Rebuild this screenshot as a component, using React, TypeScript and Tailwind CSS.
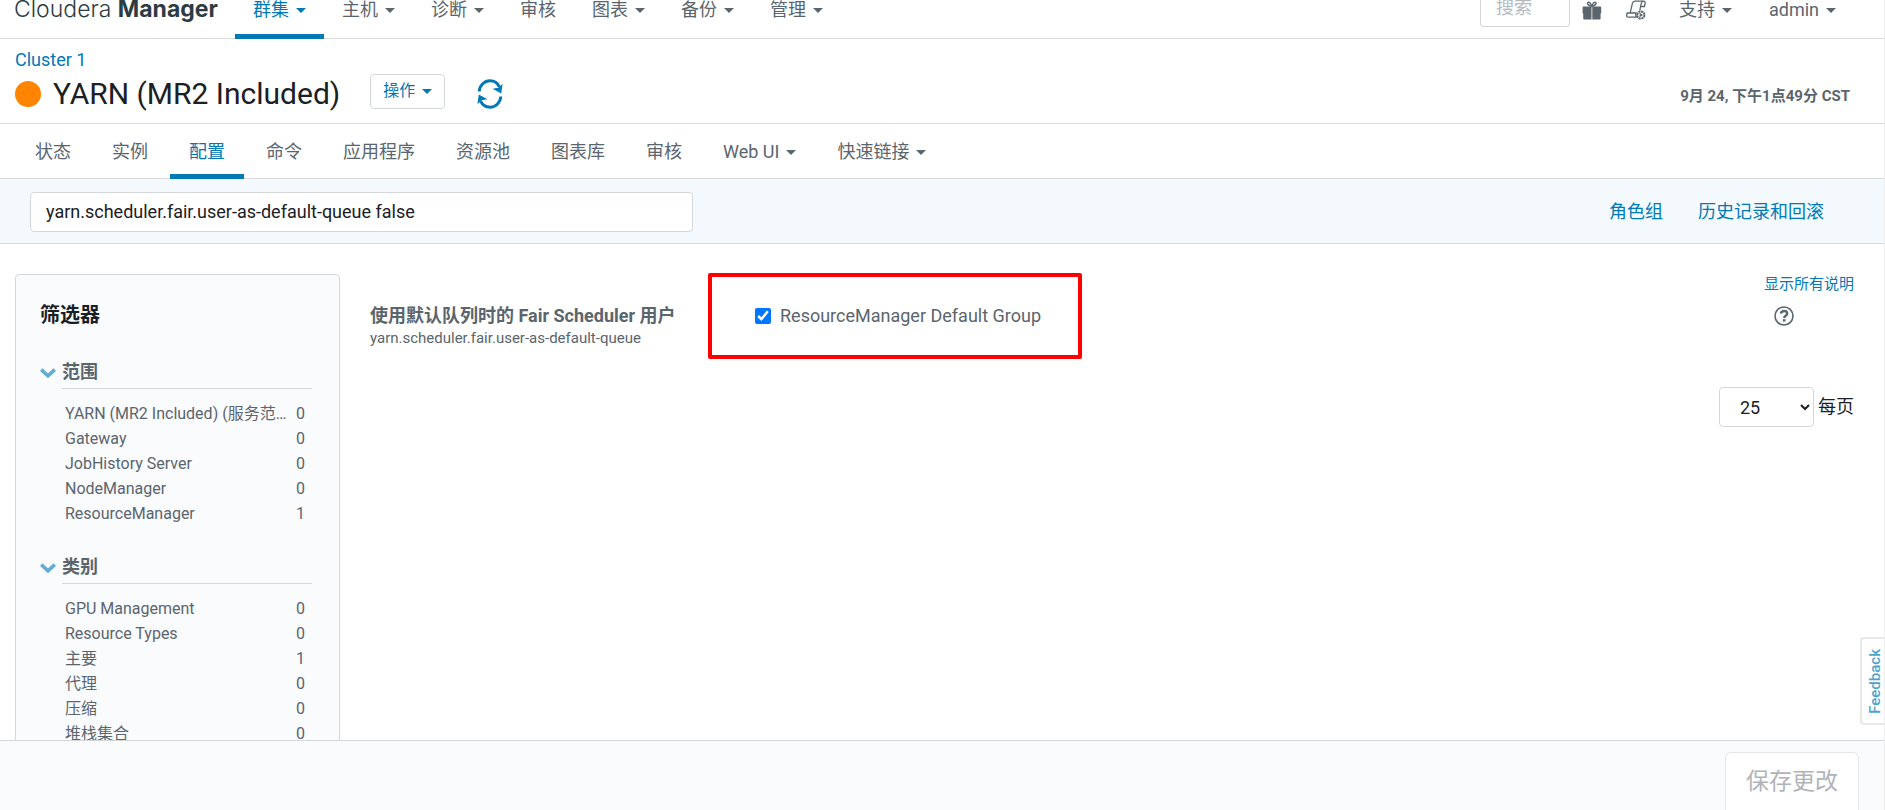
import type { ReactNode } from 'react';

type MenuItem = { label: string; caret?: boolean; active?: boolean };
type Filter = { label: string; count: number };

const mainMenu: MenuItem[] = [
  { label: '群集', caret: true, active: true },
  { label: '主机', caret: true },
  { label: '诊断', caret: true },
  { label: '审核' },
  { label: '图表', caret: true },
  { label: '备份', caret: true },
  { label: '管理', caret: true },
];

const tabs: MenuItem[] = [
  { label: '状态' },
  { label: '实例' },
  { label: '配置', active: true },
  { label: '命令' },
  { label: '应用程序' },
  { label: '资源池' },
  { label: '图表库' },
  { label: '审核' },
  { label: 'Web UI', caret: true },
  { label: '快速链接', caret: true },
];

const scopeFilters: Filter[] = [
  { label: 'YARN (MR2 Included) (服务范围)', count: 0 },
  { label: 'Gateway', count: 0 },
  { label: 'JobHistory Server', count: 0 },
  { label: 'NodeManager', count: 0 },
  { label: 'ResourceManager', count: 1 },
];

const categoryFilters: Filter[] = [
  { label: 'GPU Management', count: 0 },
  { label: 'Resource Types', count: 0 },
  { label: '主要', count: 1 },
  { label: '代理', count: 0 },
  { label: '压缩', count: 0 },
  { label: '堆栈集合', count: 0 },
];

function Caret() {
  return (
    <svg viewBox="0 0 10 5" className="ml-[7px] h-[5px] w-[10px] shrink-0" aria-hidden="true">
      <path d="M0 0h10L5 5z" fill="currentColor" />
    </svg>
  );
}

function GiftIcon() {
  return (
    <svg viewBox="0 0 20 20" className="size-5" aria-hidden="true" fill="currentColor">
      <path d="M1.600 6.600h7.900v12.900H2.200a1 1 0 0 1-1-1v-5.200H.6V7.600a1 1 0 0 1 1-1zM10.300 6.600H18.200a1 1 0 0 1 1 1v5.700h-.6v5.200a1 1 0 0 1-1 1h-7.300z" />
      <path
        d="M9.800 6.400C8.800 3 7.400 1.800 6.200 2.300 4.700 3 5.600 5.400 9.800 6.400zM9.800 6.400C10.800 3 12.200 1.800 13.400 2.300c1.500.7.6 3.100-3.600 4.100z"
        fill="none"
        stroke="currentColor"
        strokeWidth="1.4"
      />
    </svg>
  );
}

function ScriptIcon() {
  return (
    <svg
      viewBox="0 0 20 20"
      className="size-5"
      aria-hidden="true"
      fill="none"
      stroke="currentColor"
      strokeWidth="1.3"
    >
      <path d="M4.200 12.800 6.400 3.400C6.800 1.800 7.600 1.200 8.800 1.200h8.600c1.400 0 2 1 1.700 2.300l-.6 3h-3.500" />
      <path d="M17.200 1.200c-1.200.2-1.700 1.200-2 2.500l-1.400 6.600" />
      <path d="M10.400 17.200H2.200c-1.400 0-1.700-1.200-1.500-2.200l.5-2H10c-.3 1.600-.5 3.400.4 4.200z" />
      <circle cx="14.800" cy="15" r="3.600" strokeWidth="2" strokeDasharray="2.2 .6" />
      <path d="M13.600 12.800v4.400l3.400-2.200z" fill="currentColor" stroke="none" />
    </svg>
  );
}

function RefreshIcon() {
  return (
    <svg viewBox="0 0 26 30" className="h-[30px] w-[26px]" aria-hidden="true">
      <g fill="none" stroke="currentColor" strokeWidth="3">
        <path d="M2.200 12.500C2.700 6.200 7.500 1.800 13 1.800c4.200 0 7.600 2.200 9.400 6" />
        <path d="M23.800 17.500C23.300 23.800 18.500 28.200 13 28.200c-4.200 0-7.600-2.200-9.400-6" />
      </g>
      <path d="M25.600 5 24.200 14.600 15.600 9.800l5.600-1z" fill="currentColor" />
      <path d="M.4 25 1.800 15.400l8.600 4.800-5.600 1z" fill="currentColor" />
    </svg>
  );
}

function HelpIcon() {
  return (
    <svg viewBox="0 0 20 20" className="size-5" aria-hidden="true" fill="none" stroke="currentColor">
      <circle cx="10" cy="10" r="9" strokeWidth="1.6" />
      <path
        d="M6.800 7.600C7.200 5.800 8.500 5 10.100 5c1.800 0 3.100 1 3.100 2.600 0 2.200-3 2.100-3 4.400"
        strokeWidth="2.4"
      />
      <path d="M10.200 13.200v2.400" strokeWidth="2.6" />
    </svg>
  );
}

function FilterGroup({ title, filters }: { title: string; filters: Filter[] }) {
  return (
    <section className="mb-[29px]">
      <h3>
        <button type="button" className="flex w-full items-center text-lg font-bold leading-6">
          <svg viewBox="0 0 16 10" className="mb-1 mr-[6px] h-[10px] w-4 text-[#62acd1]" aria-hidden="true">
            <path d="M1.200 1.600 8 7.800l6.800-6.200" fill="none" stroke="currentColor" strokeWidth="3.600" />
          </svg>
          <span className="flex-1 border-b border-[#d4d7da] pb-1 text-left">{title}</span>
        </button>
      </h3>
      <ul className="mt-3 pl-[25px] pr-[7px]">
        {filters.map((filter) => (
          <li key={filter.label}>
            <a href="#filter" className="flex justify-between text-base leading-[25px]">
              <span className="w-[228px] truncate">{filter.label}</span>
              <span>{filter.count}</span>
            </a>
          </li>
        ))}
      </ul>
    </section>
  );
}

function NavLink({ item, className }: { item: MenuItem; className: string }) {
  const tone = item.active ? 'border-[#0079b4] text-[#0079b4]' : 'border-transparent';
  return (
    <a href="#nav" className={`flex whitespace-nowrap border-b-[5px] ${tone} ${className}`}>
      <span className="flex items-center self-start">
        {item.label}
        {item.caret && <Caret />}
      </span>
    </a>
  );
}

function IconButton({ label, children }: { label: string; children: ReactNode }) {
  return (
    <button type="button" aria-label={label}>
      {children}
    </button>
  );
}

export default function App() {
  return (
    <div className="relative flex h-screen flex-col overflow-hidden border-r border-[#eeeeee] bg-white font-[Roboto,'Noto_Sans_CJK_SC',sans-serif] text-lg leading-6 text-[#5a656d]">
      <header className="flex h-[39px] shrink-0 items-stretch border-b border-[#d9dbdd] leading-5">
        <a href="#home" className="w-[235px] pl-[14px] text-[#2d3c44]">
          <span className="block whitespace-nowrap font-[Inter,sans-serif] text-[23px] font-light leading-[18px]">
            Cloudera <b className="font-bold">Manager</b>
          </span>
        </a>
        <nav className="-mb-px flex flex-1">
          {mainMenu.map((item) => (
            <NavLink key={item.label} item={item} className="px-[18px]" />
          ))}
        </nav>
        <div className="flex items-start pr-[48px]">
          <input
            type="search"
            aria-label="搜索"
            placeholder="搜索"
            className="mr-3 h-[27px] w-[90px] rounded-b-sm border border-t-0 border-[#d4d7da] px-[15px] pb-[11px] leading-4 placeholder:text-[#b4babf]"
          />
          <IconButton label="新功能">
            <GiftIcon />
          </IconButton>
          <span className="w-6" />
          <IconButton label="运行命令">
            <ScriptIcon />
          </IconButton>
          <button type="button" className="ml-[33px] flex items-center">
            支持
            <Caret />
          </button>
          <button type="button" className="ml-[37px] flex items-center">
            admin
            <Caret />
          </button>
        </div>
      </header>

      <div className="flex h-[85px] shrink-0 items-end justify-between border-b border-[#d9dbdd] pb-[9px] pl-[15px] pr-[34px]">
        <div>
          <a href="#cluster" className="mb-[2px] block text-[#0079b4]">
            Cluster 1
          </a>
          <div className="flex h-10 items-center">
            <span className="size-[26px] rounded-full bg-[#ff8400]" />
            <h1 className="ml-3 text-3xl text-[#1b2024]">YARN (MR2 Included)</h1>
            <button
              type="button"
              className="mb-[6px] ml-[30px] flex h-[35px] items-center rounded-sm border border-[#d4d7da] px-3 text-base text-[#0079b4]"
            >
              操作
              <Caret />
            </button>
            <button type="button" aria-label="刷新" className="ml-8 text-[#0079b4]">
              <RefreshIcon />
            </button>
          </div>
        </div>
        <time className="pb-[6px] text-[15px] font-bold">9月 24, 下午1点49分 CST</time>
      </div>

      <nav className="flex h-[55px] shrink-0 gap-[3px] border-b border-[#d9dbdd] pl-4">
        {tabs.map((item) => (
          <NavLink key={item.label} item={item} className="-mb-px px-[19px] pt-4" />
        ))}
      </nav>

      <div className="flex h-[65px] shrink-0 items-center justify-between border-b border-[#d9dbdd] bg-[#f4f9fe] pl-[30px] pr-[60px] pt-[2px]">
        <input
          type="text"
          aria-label="搜索配置"
          defaultValue="yarn.scheduler.fair.user-as-default-queue false"
          className="h-10 w-[663px] rounded-sm border border-[#d4d7da] bg-white px-[15px] pb-px text-[#1b2024]"
        />
        <div className="flex gap-[35px] text-[#0079b4]">
          <a href="#roles">角色组</a>
          <a href="#history">历史记录和回滚</a>
        </div>
      </div>

      <main className="flex min-h-0 flex-1 gap-[30px] overflow-hidden pl-[15px] pr-[30px] pt-[30px]">
        <aside className="w-[325px] shrink-0 self-start rounded-sm border border-[#d4d7da] bg-[#fafbfd] pl-6 pr-[27px] pt-[26px]">
          <h2 className="mb-[31px] text-xl font-bold leading-7 text-[#1b2024]">筛选器</h2>
          <FilterGroup title="范围" filters={scopeFilters} />
          <FilterGroup title="类别" filters={categoryFilters} />
        </aside>

        <section className="-mt-px flex-1">
          <div className="flex items-start">
            <div className="w-[338px] pt-[31px]">
              <h3 className="font-bold">使用默认队列时的 Fair Scheduler 用户</h3>
              <p className="text-[15px] leading-5">yarn.scheduler.fair.user-as-default-queue</p>
            </div>
            <div className="flex h-[86px] w-[374px] items-center rounded-xs border-4 border-[#ff0000] pl-[43px]">
              <label className="flex items-center gap-[9px]">
                <input type="checkbox" defaultChecked className="size-4" />
                ResourceManager Default Group
              </label>
            </div>
            <div className="ml-auto flex flex-col items-end">
              <a href="#descriptions" className="text-[15px] leading-[22px] text-[#0079b4]">
                显示所有说明
              </a>
              <button type="button" aria-label="帮助" className="mr-[60px] mt-[11px]">
                <HelpIcon />
              </button>
            </div>
          </div>
          <label className="mt-7 flex items-center justify-end gap-1 text-[#1b2024]">
            <select
              aria-label="每页"
              defaultValue="25"
              className="h-10 w-[95px] rounded-sm border border-[#d4d7da] bg-white pl-4"
            >
              <option>25</option>
              <option>50</option>
              <option>100</option>
            </select>
            每页
          </label>
        </section>
      </main>

      <footer className="flex h-[70px] shrink-0 items-stretch justify-end border-t border-[#d4d7da] bg-[#fafbfd] pr-[25px] pt-[11px]">
        <button
          type="button"
          disabled
          className="rounded-t-md border border-b-0 border-[#e4e6e8] bg-white px-5 text-[23px] text-[#b0b4b8]"
        >
          保存更改
        </button>
      </footer>

      <button
        type="button"
        className="absolute bottom-[85px] right-0 flex h-[88px] w-6 items-center justify-center rounded-l-sm border-2 border-r-0 border-[#e8e8e8] bg-white pl-1 text-[15px] font-medium text-[#4ea3cd]"
      >
        <span className="rotate-180 [writing-mode:vertical-rl]">Feedback</span>
      </button>
    </div>
  );
}
